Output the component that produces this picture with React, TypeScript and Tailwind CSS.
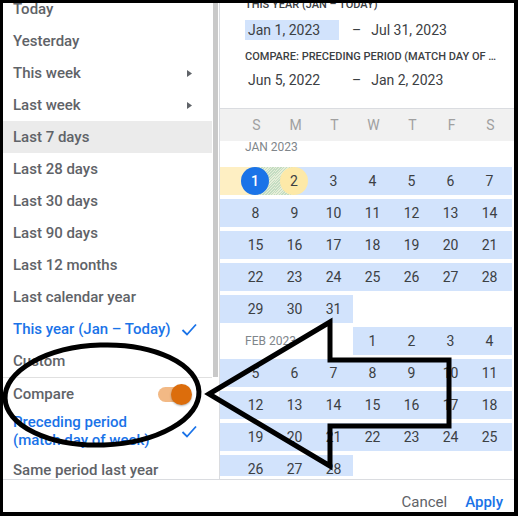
import clsx from "clsx";

const ranges = [
  { label: "Today" },
  { label: "Yesterday" },
  { label: "This week", sub: true },
  { label: "Last week", sub: true },
  { label: "Last 7 days", hover: true },
  { label: "Last 28 days" },
  { label: "Last 30 days" },
  { label: "Last 90 days" },
  { label: "Last 12 months" },
  { label: "Last calendar year" },
  { label: "This year (Jan – Today)", selected: true },
  { label: "Custom" },
];

const janWeeks: (number | null)[][] = [
  [1, 2, 3, 4, 5, 6, 7],
  [8, 9, 10, 11, 12, 13, 14],
  [15, 16, 17, 18, 19, 20, 21],
  [22, 23, 24, 25, 26, 27, 28],
  [29, 30, 31, null, null, null, null],
];

const febWeeks: (number | null)[][] = [
  [null, null, null, 1, 2, 3, 4],
  [5, 6, 7, 8, 9, 10, 11],
  [12, 13, 14, 15, 16, 17, 18],
  [19, 20, 21, 22, 23, 24, 25],
  [26, 27, 28, null, null, null, null],
];

const hatch =
  "bg-[repeating-linear-gradient(135deg,#c3dcc2_0px,#c3dcc2_1px,#e6eed8_1px,#e6eed8_2px)]";

function Check() {
  return (
    <svg width="16" height="13" viewBox="0 0 16 13" fill="none">
      <polyline points="1.5,7 6,11.5 15,1.5" stroke="#1a73e8" strokeWidth="1.8" />
    </svg>
  );
}

function Caret() {
  return (
    <svg width="5" height="7" viewBox="0 0 5 7">
      <polygon points="0,0 5,3.5 0,7" fill="#5f6368" />
    </svg>
  );
}

function Day({ d }: { d: number | null }) {
  return (
    <div
      className={clsx(
        "w-[39px] h-full flex items-center justify-center text-[14px] text-[#3c4043]",
        d !== null && "bg-[#d2e3fc]"
      )}
    >
      {d}
    </div>
  );
}

function Week({ days, label }: { days: (number | null)[]; label?: string }) {
  const lead = days[0] !== null;
  const trail = days[6] !== null;
  return (
    <div className="flex h-[28px] mb-[4px] shrink-0">
      {label ? (
        <>
          {/* month label sits in the blank leading cells */}
          <div className="w-[133px] h-full flex items-center pl-[25px] text-[12px] text-[#80868b]">
            {label}
          </div>
          {days.slice(3).map((d, i) => (
            <Day key={i} d={d} />
          ))}
        </>
      ) : (
        <>
          <div className={clsx("w-[16px] h-full", lead && "bg-[#d2e3fc]")} />
          {days.map((d, i) => (
            <Day key={i} d={d} />
          ))}
        </>
      )}
      <div className={clsx("w-[3px] h-full", trail && "bg-[#d2e3fc]")} />
    </div>
  );
}

function FirstWeek() {
  return (
    <div className="flex h-[28px] mb-[4px] shrink-0">
      <div className="w-[16px] h-full bg-[#feefc3]" />
      {/* Jan 1: start of range */}
      <div className="relative w-[39px] h-full flex">
        <div className="w-1/2 h-full bg-[#feefc3]" />
        <div className={clsx("w-1/2 h-full", hatch)} />
        <div className="absolute left-[5px] top-0 w-[28px] h-[28px] rounded-full bg-[#1a73e8] flex items-center justify-center text-[14px] font-medium text-white">
          1
        </div>
      </div>
      {/* Jan 2: end of compare range */}
      <div className="relative w-[39px] h-full flex">
        <div className={clsx("w-1/2 h-full", hatch)} />
        <div className="w-1/2 h-full bg-[#d2e3fc]" />
        <div className="absolute left-[5px] top-0 w-[28px] h-[28px] rounded-full bg-[#fde9a8] flex items-center justify-center text-[14px] text-[#3c4043]">
          2
        </div>
      </div>
      {[3, 4, 5, 6, 7].map((d) => (
        <Day key={d} d={d} />
      ))}
      <div className="w-[3px] h-full bg-[#d2e3fc]" />
    </div>
  );
}

function LeftPanel() {
  return (
    <div className="w-[216px] h-full flex flex-col shrink-0">
      <div className="h-[374px] flex overflow-hidden">
        <div className="w-[209px] -mt-[10px]">
          {ranges.map((r) => (
            <div
              key={r.label}
              className={clsx(
                "h-[32px] flex items-center justify-between pl-[10px] pr-[15px] text-[15px] font-medium",
                r.hover && "bg-[#ebebeb]",
                r.selected ? "text-[#1a73e8]" : "text-[#5f6368]"
              )}
            >
              <span className="whitespace-nowrap">{r.label}</span>
              <span className="w-[16px] flex justify-center">
                {r.sub && <Caret />}
                {r.selected && <Check />}
              </span>
            </div>
          ))}
        </div>
        <div className="w-[7px] h-full pl-[1px] pr-[1px]">
          <div className="w-full h-full bg-[#c9c9c9]" />
        </div>
      </div>
      <div className="flex-1 border-t border-[#e0e0e0] w-[209px] overflow-hidden text-[15px] font-medium">
        <div className="h-[32px] flex items-center justify-between pl-[10px] pr-[25px] text-[#5f6368]">
          <span>Compare</span>
          <div className="relative w-[29px] h-[15px] rounded-full bg-[#f2b985]">
            <div className="absolute -right-[5px] -top-[3px] w-[21px] h-[21px] rounded-full bg-[#dc6d0c] shadow-[0_1px_2px_rgba(0,0,0,0.3)]" />
          </div>
        </div>
        <div className="h-[42px] flex items-center justify-between pl-[10px] pr-[15px] text-[#1a73e8] leading-[18px]">
          <span>
            Preceding period
            <br />
            (match day of week)
          </span>
          <span className="w-[16px] flex justify-center">
            <Check />
          </span>
        </div>
        <div className="h-[36px] flex items-center pl-[10px] text-[#5f6368] whitespace-nowrap">
          Same period last year
        </div>
      </div>
    </div>
  );
}

function RightPanel() {
  return (
    <div className="flex-1 h-full border-l border-[#dadce0] flex flex-col overflow-hidden">
      <div className="pl-[25px] shrink-0">
        <div className="-mt-[5px] h-[14px] leading-[14px] text-[11px] font-medium text-[#3c4043] uppercase">
          This year (Jan – Today)
        </div>
        <div className="mt-[8px] h-[20px] flex items-center text-[14px] text-[#3c4043]">
          <div className="w-[94px] h-full bg-[#d2e3fc] pl-[3px] flex items-center">Jan 1, 2023</div>
          <span className="ml-[13px]">–</span>
          <span className="ml-[10px]">Jul 31, 2023</span>
        </div>
        <div className="mt-[10px] h-[14px] leading-[14px] text-[11px] font-medium text-[#3c4043] uppercase whitespace-nowrap">
          Compare: Preceding period (match day of …
        </div>
        <div className="mt-[6px] h-[20px] flex items-center text-[14px] text-[#3c4043]">
          <div className="w-[94px] pl-[3px]">Jun 5, 2022</div>
          <span className="ml-[13px]">–</span>
          <span className="ml-[10px]">Jan 2, 2023</span>
        </div>
      </div>
      <div className="mt-[18px] border-t border-[#dadce0] h-[33px] bg-[#f1f1f1] flex pl-[16px] shrink-0">
        {["S", "M", "T", "W", "T", "F", "S"].map((w, i) => (
          <div
            key={i}
            className="w-[39px] pl-[2px] flex items-center justify-center text-[14px] text-[#a0a0a0]"
          >
            {w}
          </div>
        ))}
      </div>
      <div className="flex-1 overflow-hidden flex flex-col mb-[3px]">
        <div className="h-[12px] leading-[12px] pl-[25px] text-[12px] text-[#80868b] shrink-0">
          JAN 2023
        </div>
        <div className="mt-[14px]" />
        <FirstWeek />
        {janWeeks.slice(1).map((w, i) => (
          <Week key={i} days={w} />
        ))}
        <Week days={febWeeks[0]} label="FEB 2023" />
        {febWeeks.slice(1).map((w, i) => (
          <Week key={i} days={w} />
        ))}
      </div>
    </div>
  );
}

export default function App() {
  return (
    <div className="relative w-[518px] h-[516px] bg-black pt-[3px] pl-[3px] pr-[4px] pb-[4px] font-['Roboto','Liberation_Sans',sans-serif]">
      <div className="w-full h-full bg-white flex flex-col overflow-hidden">
        <div className="h-[477px] flex border-b border-[#dadce0] shrink-0">
          <LeftPanel />
          <RightPanel />
        </div>
        <div className="flex-1 flex justify-end items-start pt-[12px] pr-[11px] gap-[18px] text-[15px] leading-[20px]">
          <button className="text-[#5f6368]">Cancel</button>
          <button className="text-[#1a73e8] font-medium">Apply</button>
        </div>
      </div>
      {/* annotation overlay: circle + arrow */}
      <svg
        className="absolute inset-0 pointer-events-none"
        width="518"
        height="516"
        viewBox="0 0 518 516"
      >
        <ellipse
          cx="102"
          cy="395"
          rx="97"
          ry="50"
          transform="rotate(-2 102 395)"
          fill="none"
          stroke="black"
          strokeWidth="5"
        />
        <polygon
          points="209,394 330,322 330,360 449,360 449,426 330,426 330,466"
          fill="none"
          stroke="black"
          strokeWidth="5"
          strokeLinejoin="miter"
        />
      </svg>
    </div>
  );
}
